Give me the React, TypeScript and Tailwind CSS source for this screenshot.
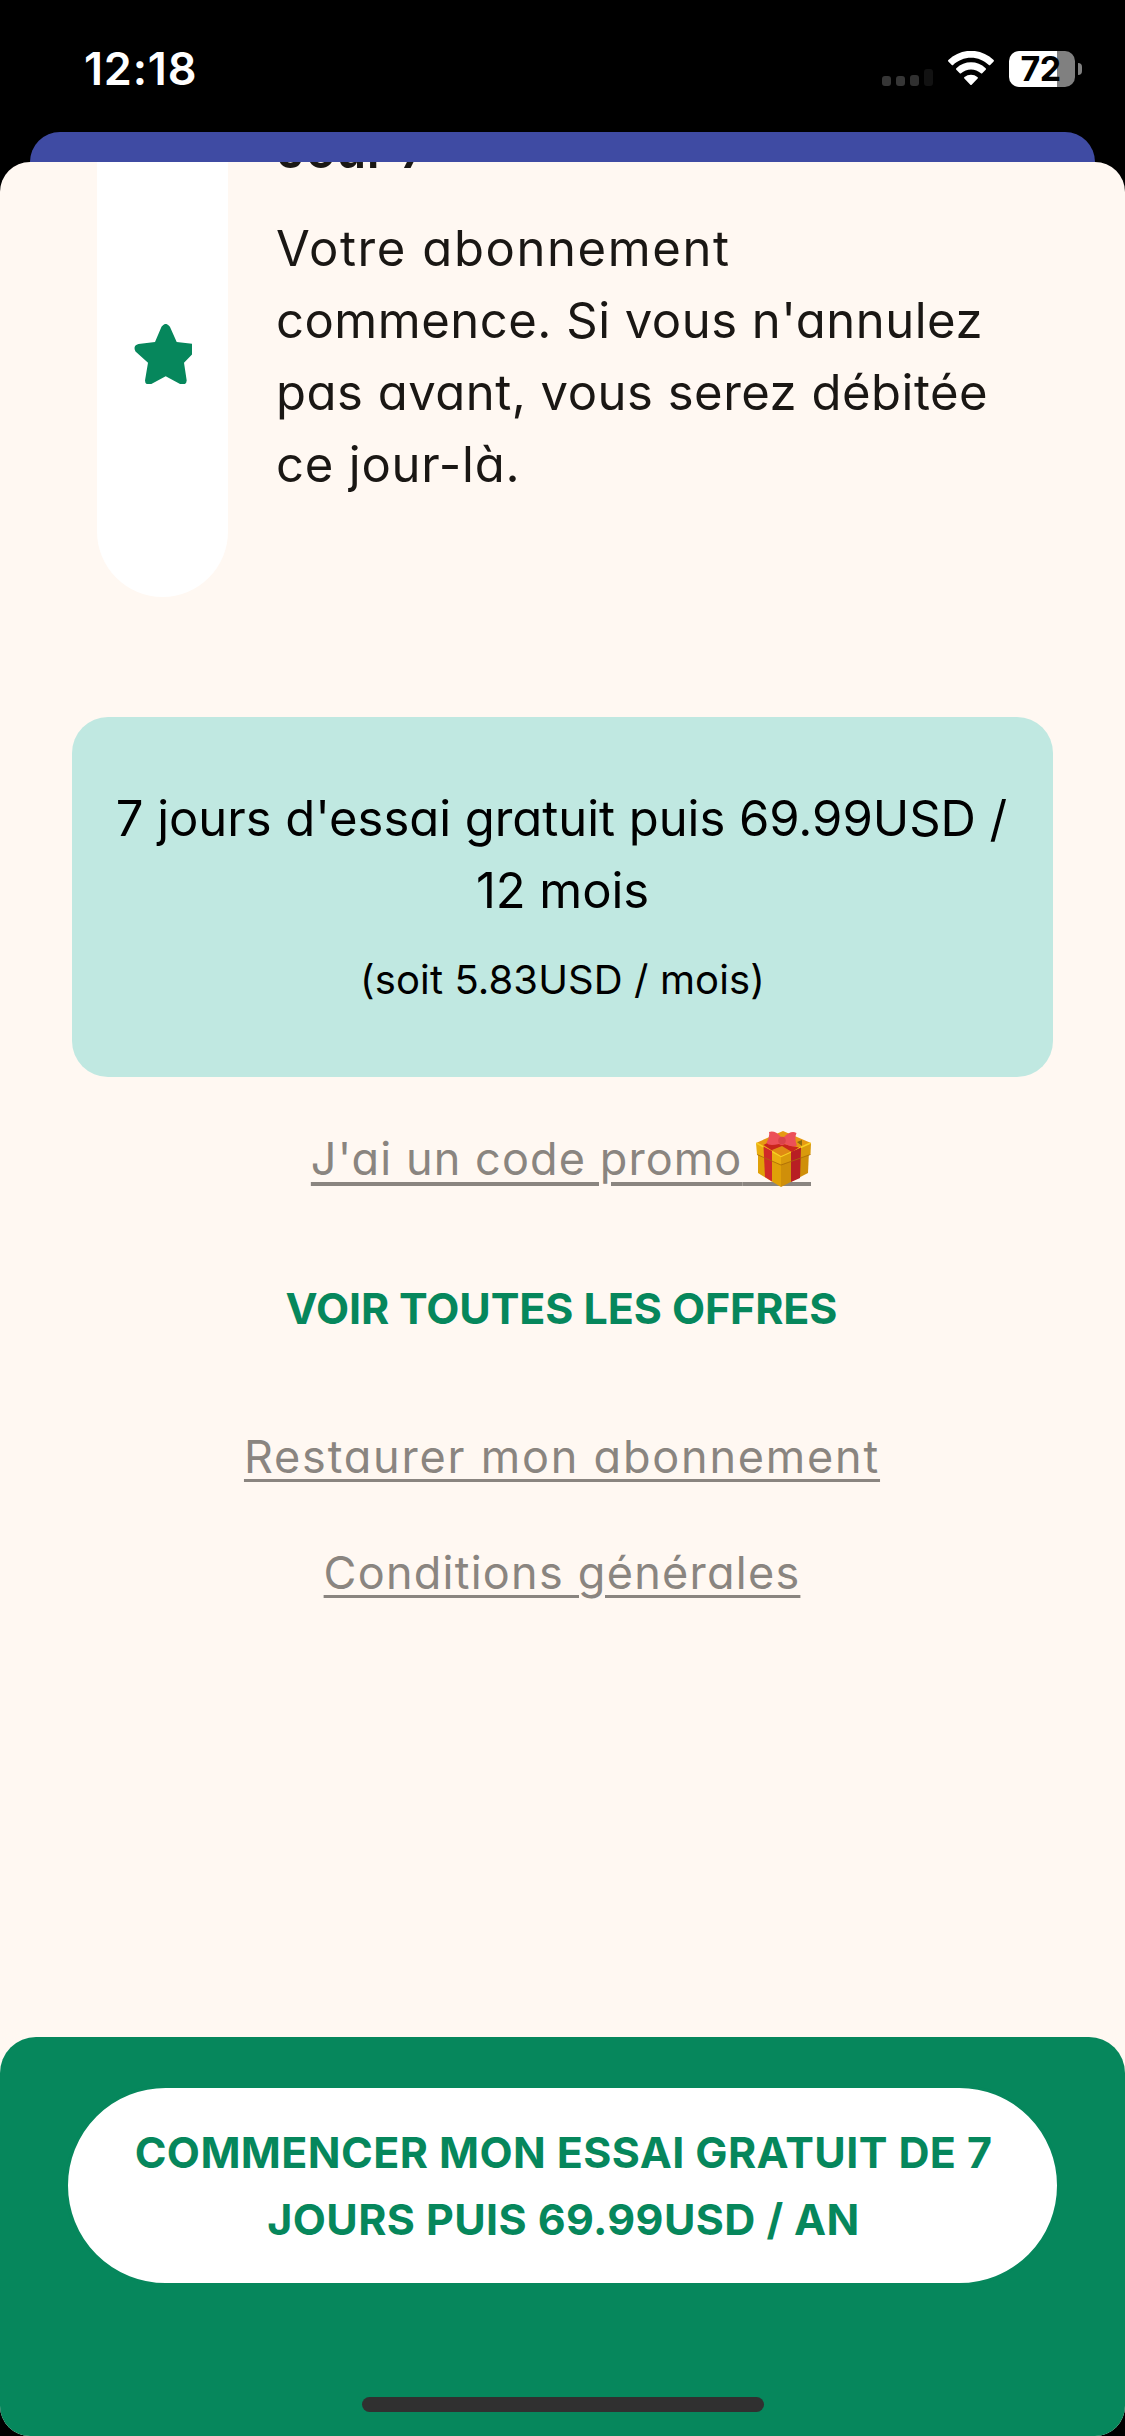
import { ReactNode } from "react";

function SignalIcon() {
  return (
    <svg width="51" height="36" viewBox="0 0 51 36">
      <rect x="0" y="25" width="9" height="10" rx="3" fill="#363636" />
      <rect x="14" y="25" width="9" height="10" rx="3" fill="#363636" />
      <rect x="28" y="24" width="9" height="11" rx="3" fill="#303030" />
      <rect x="42" y="18" width="9" height="17" rx="3" fill="#121212" />
    </svg>
  );
}

function WifiIcon() {
  return (
    <svg width="46" height="34" viewBox="0 0 17 12.33" preserveAspectRatio="none" fill="#fff">
      <path d="M8.5 2.46c2.46 0 4.83.95 6.61 2.64.13.13.35.13.48-.01l1.28-1.3c.07-.07.1-.16.1-.25 0-.1-.04-.18-.1-.25-4.69-4.5-12.06-4.5-16.74 0-.07.06-.11.16-.11.25 0 .1.03.18.1.25l1.28 1.3c.13.13.35.14.48.01 1.78-1.7 4.15-2.64 6.62-2.64z" />
      <path d="M8.5 6.67c1.35 0 2.66.5 3.67 1.4.14.13.35.13.48 0l1.28-1.3c.07-.07.1-.17.1-.27 0-.09-.04-.18-.11-.25-3.06-2.84-7.78-2.84-10.84 0-.07.07-.11.16-.11.25 0 .1.04.2.1.27l1.28 1.3c.13.13.35.13.48 0 1.01-.9 2.32-1.4 3.67-1.4z" />
      <path d="M10.95 9.48c.07.07.11.16.11.26s-.04.19-.11.25l-2.21 2.24c-.06.07-.15.1-.24.1s-.18-.03-.24-.1L6.05 9.99c-.07-.07-.1-.16-.1-.26 0-.1.04-.19.11-.26 1.41-1.19 3.48-1.19 4.89.01z" />
    </svg>
  );
}

function Battery() {
  return (
    <div className="flex items-center gap-[3px]">
      <div className="flex h-9 w-[66px] items-center justify-center rounded-[10px] bg-[linear-gradient(to_right,#fff_48px,#808080_48px)] pr-[3px] text-[34px] leading-9 font-bold tracking-[-0.5px] text-black">
        72
      </div>
      <div className="h-3 w-1 rounded-r-full bg-[#808080]" />
    </div>
  );
}

// The right arm is cut by the icon box
function StarIcon() {
  return (
    <svg width="58" height="60" viewBox="0 0 58 60">
      <path
        d="M27.5 2.8 Q31.7 -3 35.9 2.8 L42.7 18 L60 20 V28.5 L50 38.7 L52.7 56.5 Q52.5 61 47 60.5 L31.7 52.3 L16.4 60.5 Q11 61 11 56.5 L14 38.7 L1.5 27.5 Q-1.5 21.5 4.5 20 L21 18 Z"
        fill="#06875c"
      />
    </svg>
  );
}

function GiftIcon() {
  return (
    <svg width="55" height="56" viewBox="0 0 55 56" className="relative">
      <path d="M2 20 L25 31 V56 L2 42 Z" fill="#e0a008" />
      <path d="M53 20 L25 31 V56 L52 42 Z" fill="#cf8f0a" />
      <path d="M0 12 L25 25 V34 L1 23.5 Z" fill="#eaae10" />
      <path d="M55 12 L25 25 V34 L54.5 23.5 Z" fill="#d99a0c" />
      <path d="M27 0 L55 12 L25 26 L0 12 Z" fill="#e69a12" />
      <path d="M0.5 12 L25 25.5 L54.5 12" fill="none" stroke="#f7cf22" strokeWidth="1.5" />
      <path d="M7.5 14 L15 10 L43 16.5 L36 21 L25 16 L16 19.5 Z" fill="#c9251c" />
      <path d="M16 19 L26 15 L35 20.5 L25 25 Z" fill="#e08a14" />
      <path d="M7.5 15.5 L16 20 V50.5 L9 46 Z" fill="#d02a28" />
      <path d="M35 21 L45 16.5 L44 47 L35 51 Z" fill="#b81f24" />
      <path d="M1 23.5 L25 34 L54.5 23.5" fill="none" stroke="#a86a08" strokeWidth="0.8" />
      <path d="M41 11 L46 9 V15 Z" fill="#8a6a10" />
      <path
        d="M25 6 Q19 -1 13 1 Q14 6 10.5 12 Q13 15.5 23 13 Q26 15 29 13 Q36 17 41 14.5 Q38 8 40.5 2 Q35 -1 28 6 Z"
        fill="#ec5058"
      />
      <circle cx="26" cy="9.5" r="3.8" fill="#d9434a" />
    </svg>
  );
}

function TextLine({ className, children }: { className: string; children: ReactNode }) {
  return <span className={`block whitespace-nowrap ${className}`}>{children}</span>;
}

function StatusBar() {
  return (
    <header className="flex h-[132px] items-start justify-between pt-[51px] pr-[43px] pl-[84px] text-white">
      <span className="-mt-[9px] text-[45px] leading-[54px] font-semibold tracking-[0.8px]">12:18</span>
      <div className="flex items-start">
        <SignalIcon />
        <div className="mx-[15px]">
          <WifiIcon />
        </div>
        <Battery />
      </div>
    </header>
  );
}

function TrialStep() {
  return (
    <section className="flex h-[435px] overflow-hidden">
      <div className="ml-[97px] flex w-[131px] shrink-0 justify-center rounded-b-full bg-white pt-[162px]">
        <StarIcon />
      </div>
      <div className="ml-[49px] text-[49px] leading-[72px] text-[#1a1714]">
        <h2 className="-mt-[47px] font-semibold tracking-[0.5px]">Jour 7</h2>
        <p className="mt-[26px]">
          <TextLine className="-ml-px tracking-[1.6px]">Votre abonnement</TextLine>
          <TextLine className="-ml-px tracking-[0.5px]">commence. Si vous n'annulez</TextLine>
          <TextLine className="-ml-px tracking-[0.5px]">pas avant, vous serez débitée</TextLine>
          <TextLine className="-ml-px tracking-[0.8px]">ce jour-là.</TextLine>
        </p>
      </div>
    </section>
  );
}

function PriceCard() {
  return (
    <section className="mx-[72px] mt-[120px] flex h-[360px] flex-col items-center rounded-[36px] bg-[#c0e8e1] pt-[66px] text-[49px] leading-[72px] text-black">
      <TextLine className="-ml-0.5 tracking-[-0.05px]">7 jours d'essai gratuit puis 69.99USD /</TextLine>
      <TextLine className="tracking-[-0.1px]">12 mois</TextLine>
      <TextLine className="mt-[23px] text-[40px] leading-[60px] tracking-[0.1px]">(soit 5.83USD / mois)</TextLine>
    </section>
  );
}

function Links() {
  return (
    <nav className="flex flex-col items-center text-[45px] leading-[64px] text-[#8a8580]">
      <a href="#" className="mt-[50px] mr-[3px] flex whitespace-nowrap">
        <span className="whitespace-pre tracking-[1.1px] underline decoration-4 underline-offset-[7px]">
          J'ai un code promo{" "}
        </span>
        <span className="relative flex h-[59px] w-[55px] items-start pt-1">
          <span className="absolute bottom-0 left-0 h-1 w-full bg-[#8a8580]" />
          <GiftIcon />
        </span>
      </a>
      <a href="#" className="mt-[85px] mr-0.5 text-[43px] font-bold tracking-[-0.1px] text-[#06875c]">
        VOIR TOUTES LES OFFRES
      </a>
      <a href="#" className="mt-[85px] mr-px tracking-[1.8px] underline decoration-3 underline-offset-[6px]">
        Restaurer mon abonnement
      </a>
      <a href="#" className="mt-[52px] mr-px tracking-[1.25px] underline decoration-3 underline-offset-[6px]">
        Conditions générales
      </a>
    </nav>
  );
}

function Footer() {
  return (
    <footer className="mt-auto flex h-[399px] flex-col items-center rounded-t-[36px] bg-[#06875c] pt-12">
      <button className="flex h-[201px] w-[995px] flex-col items-center rounded-full border-3 border-[#06875c] bg-white pt-[31px] text-[43px] leading-[67px] font-bold text-[#06875c]">
        <TextLine className="ml-0.5 tracking-[0.4px]">COMMENCER MON ESSAI GRATUIT DE 7</TextLine>
        <TextLine className="ml-0.5 tracking-[0.4px]">JOURS PUIS 69.99USD / AN</TextLine>
      </button>
      <div className="mt-[111px] h-[15px] w-[402px] rounded-full bg-[#303030]" />
    </footer>
  );
}

export default function App() {
  return (
    <div className="flex h-[2436px] w-[1125px] flex-col overflow-hidden bg-black font-['Inter','Liberation_Sans',sans-serif] [font-feature-settings:'cv11']">
      <StatusBar />
      <div className="mx-[30px] h-[60px] shrink-0 rounded-t-[30px] bg-[#3f4ba3]" />
      <main className="relative -mt-[30px] flex flex-1 flex-col overflow-hidden rounded-[30px] bg-[#fff8f2]">
        <TrialStep />
        <PriceCard />
        <Links />
        <Footer />
      </main>
    </div>
  );
}
